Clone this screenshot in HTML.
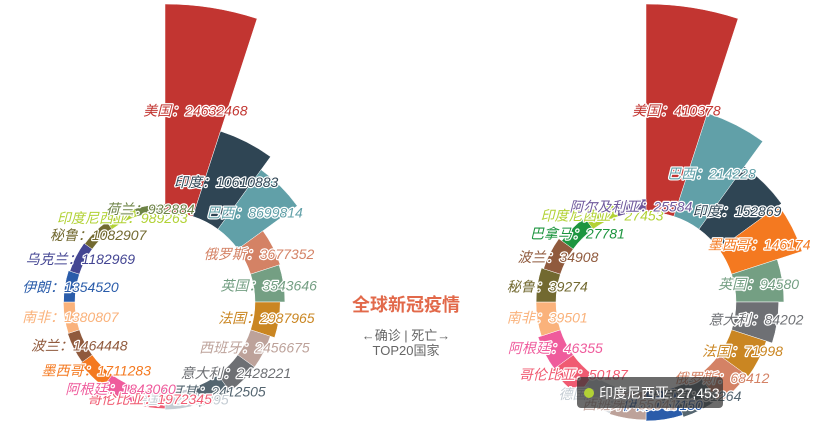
<!DOCTYPE html>
<html><head><meta charset="utf-8">
<style>
html,body{margin:0;padding:0;background:#fff;width:824px;height:437px;overflow:hidden}
svg{display:block}
text{font-family:"Liberation Sans","Noto Sans CJK SC",sans-serif}
.lb{font-size:14px;font-style:italic;stroke:#fff;stroke-width:2.4px;paint-order:stroke;stroke-linejoin:round}
</style></head>
<body>
<svg id="s" width="824" height="437" viewBox="0 0 824 437" xmlns="http://www.w3.org/2000/svg">
<g id="g"></g>
<text x="406" y="311" text-anchor="middle" font-size="18" font-weight="bold" fill="#e2694a">全球新冠疫情</text>
<text x="406" y="340" text-anchor="middle" font-size="13" fill="#666">←确诊 | 死亡→</text>
<text x="406" y="355" text-anchor="middle" font-size="13" fill="#666">TOP20国家</text>
<g id="tip">
<rect x="577" y="377" width="146" height="31" rx="4" fill="rgba(50,50,50,0.72)"/>
<circle cx="589" cy="393" r="5" fill="#b2d235"/>
<text x="599" y="398" font-size="14" fill="#fff">印度尼西亚: 27,453</text>
</g>
</svg>
<script>
var C={"美国":"#c23531","印度":"#2f4554","巴西":"#61a0a8","俄罗斯":"#d48265","英国":"#749f83","法国":"#ca8622","西班牙":"#bda29a","意大利":"#6e7074","土耳其":"#546570","德国":"#c4ccd3","哥伦比亚":"#f05b72","阿根廷":"#ef5b9c","墨西哥":"#f47920","波兰":"#905a3d","南非":"#fab27b","伊朗":"#2a5caa","乌克兰":"#444693","秘鲁":"#726930","印度尼西亚":"#b2d235","荷兰":"#6d8346","巴拿马":"#1d953f","阿尔及利亚":"#6f599c"};
var L=[["美国",24632468],["印度",10610883],["巴西",8699814],["俄罗斯",3677352],["英国",3543646],["法国",2987965],["西班牙",2456675],["意大利",2428221],["土耳其",2412505],["德国",2095395],["哥伦比亚",1972345],["阿根廷",1843060],["墨西哥",1711283],["波兰",1464448],["南非",1380807],["伊朗",1354520],["乌克兰",1182969],["秘鲁",1082907],["印度尼西亚",989263],["荷兰",932884]];
var R=[["美国",410378],["巴西",214228],["印度",152869],["墨西哥",146174],["英国",94580],["意大利",84202],["法国",71998],["俄罗斯",68412],["土耳其",61264],["伊朗",57150],["西班牙",55041],["德国",53127],["哥伦比亚",50187],["阿根廷",46355],["南非",39501],["秘鲁",39274],["波兰",34908],["巴拿马",27781],["印度尼西亚",27453],["阿尔及利亚",25584]];
var g=document.getElementById('g'),paths='',labels='';
function pt(cx,cy,r,a){var t=a*Math.PI/180;return [cx+r*Math.sin(t),cy-r*Math.cos(t)];}
function pie(d,cx,cy){
 var r0=90,r1=298,max=d[0][1];
 d.forEach(function(e,i){
  var a0=i*18,a1=a0+18,r=r0+(r1-r0)*e[1]/max;
  var p1=pt(cx,cy,r0,a0),p2=pt(cx,cy,r,a0),p3=pt(cx,cy,r,a1),p4=pt(cx,cy,r0,a1);
  paths+='<path d="M'+p1+'L'+p2+'A'+r+','+r+' 0 0 1 '+p3+'L'+p4+'A'+r0+','+r0+' 0 0 0 '+p1+'Z" fill="'+C[e[0]]+'" stroke="#fff" stroke-width="0.5"/>';
  var m=pt(cx,cy,(r0+r)/2,a0+9);
  labels+='<text class="lb" x="'+m[0]+'" y="'+(m[1]+5)+'" text-anchor="middle" fill="'+C[e[0]]+'">'+e[0]+'：'+e[1]+'</text>';
 });
}
pie(L,165,302);pie(R,646,302);
g.innerHTML=paths+labels;
</script>
</body></html>
